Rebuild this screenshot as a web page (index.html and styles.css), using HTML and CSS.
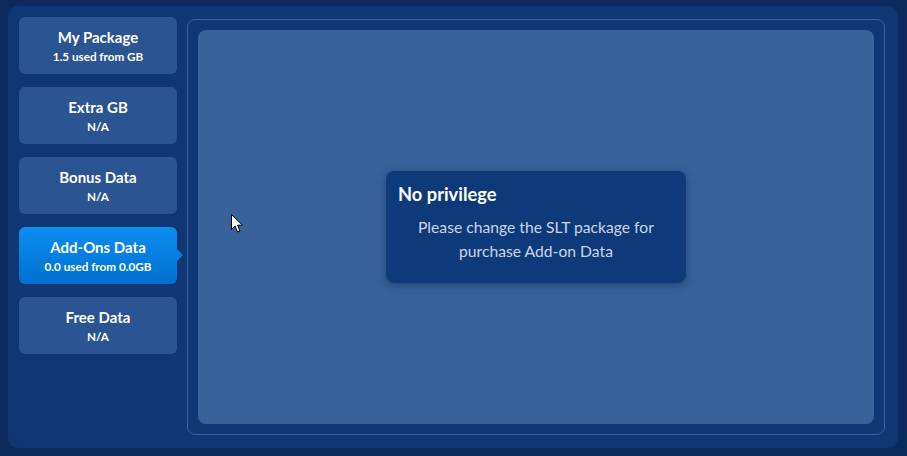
FILE: index.html
```html
<!DOCTYPE html>
<html>
<head>
<meta charset="utf-8">
<link rel="stylesheet" href="styles.css">
</head>
<body>
<div class="page">
  <div class="panel">
    <div class="sidebar">
      <div class="card"><div class="card-title">My Package</div><div class="card-sub">1.5 used from GB</div></div>
      <div class="card"><div class="card-title">Extra GB</div><div class="card-sub">N/A</div></div>
      <div class="card"><div class="card-title">Bonus Data</div><div class="card-sub">N/A</div></div>
      <div class="card active"><div class="card-title">Add-Ons Data</div><div class="card-sub">0.0 used from 0.0GB</div></div>
      <div class="card"><div class="card-title">Free Data</div><div class="card-sub">N/A</div></div>
    </div>
    <div class="content">
      <div class="inner">
        <div class="modal">
          <div class="modal-title">No privilege</div>
          <div class="modal-text">Please change the SLT package for<br>purchase Add-on Data</div>
        </div>
        <svg class="cursor" width="13" height="20" viewBox="0 0 13 20"><path d="M0.5 0.5 L0.5 15.5 L4 12 L6.5 18 L9 17 L6.5 11.2 L11.5 11.2 Z" fill="#fff" stroke="#000" stroke-width="1"/></svg>
      </div>
    </div>
  </div>
</div>
</body>
</html>
```
FILE: styles.css
```css
html, body {
  margin: 0;
  padding: 0;
  background: #0c2a5b;
  font-family: Lato, "Open Sans", sans-serif;
}
.page {
  width: 907px;
  height: 456px;
  padding: 6px 9px 8px 8px;
  box-sizing: border-box;
}
.panel {
  height: 442px;
  width: 890px;
  background: #0f3774;
  border-radius: 10px;
  box-sizing: border-box;
  padding: 11px 13px 13px 11px;
  display: flex;
  gap: 10px;
}
.sidebar {
  width: 158px;
  display: flex;
  flex-direction: column;
  gap: 13px;
}
.card {
  position: relative;
  height: 57px;
  background: #2a5592;
  border-radius: 6px;
  display: flex;
  flex-direction: column;
  align-items: center;
  justify-content: flex-start;
  padding-top: 10px;
  color: #fff;
  font-weight: 700;
  box-sizing: border-box;
}
.card-title {
  font-size: 15px;
  line-height: 20px;
}
.card-sub {
  font-size: 11.7px;
  line-height: 19px;
}
.card.active {
  background: linear-gradient(180deg, #0a8ef0 0%, #0070cf 100%);
}
.card.active::after {
  content: "";
  position: absolute;
  right: -6px;
  top: 22px;
  border-left: 6px solid #0680e0;
  border-top: 6px solid transparent;
  border-bottom: 6px solid transparent;
}
.content {
  flex: 1;
  margin-top: 2px;
  border: 1px solid #3563a4;
  border-radius: 8px;
  padding: 10px;
  display: flex;
}
.inner {
  position: relative;
  flex: 1;
  background: #37629a;
  border-radius: 8px;
  display: flex;
  align-items: center;
  justify-content: center;
}
.modal {
  width: 300px;
  height: 112px;
  box-sizing: border-box;
  background: #0f3a79;
  border-radius: 8px;
  box-shadow: 0 2px 10px rgba(10, 30, 70, 0.45);
  padding: 12px 12px 0 12px;
  color: #fff;
}
.modal-title {
  font-size: 18.3px;
  font-weight: 700;
  line-height: 22px;
}
.modal-text {
  margin-top: 10px;
  text-align: center;
  font-size: 15.7px;
  line-height: 24px;
  color: #c9d5ea;
}
.cursor {
  position: absolute;
  left: 33px;
  top: 184px;
}
```
